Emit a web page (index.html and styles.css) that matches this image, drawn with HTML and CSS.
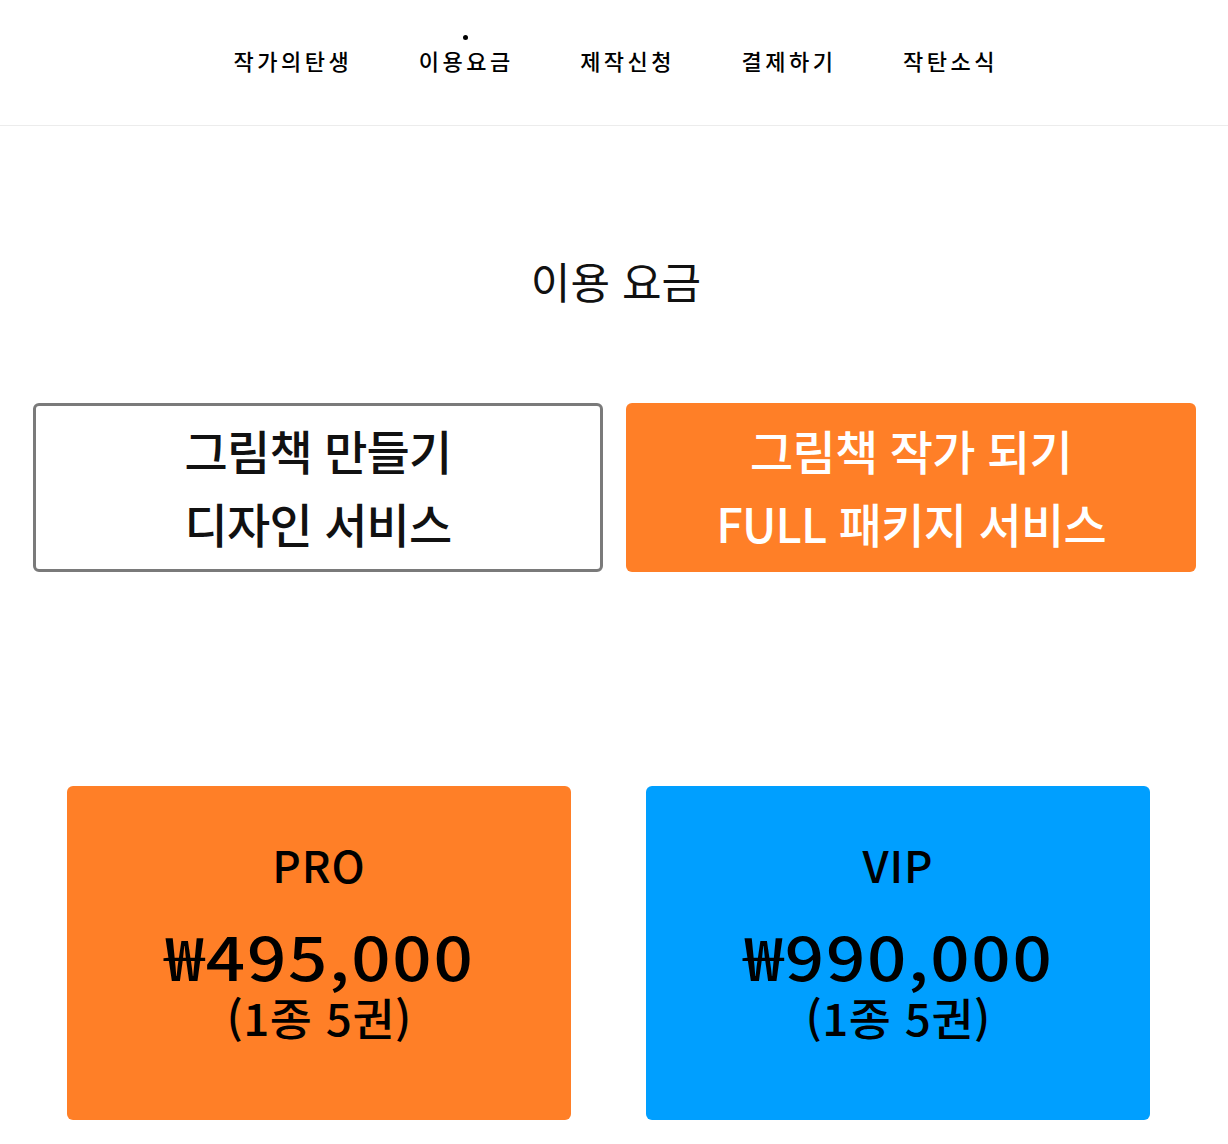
FILE: index.html
```html
<!DOCTYPE html>
<html lang="ko">
<head>
<meta charset="utf-8">
<title>이용 요금</title>
<link rel="stylesheet" href="styles.css">
</head>
<body>
<header class="nav">
  <a class="nav-item">작가의탄생</a>
  <a class="nav-item active">이용요금</a>
  <a class="nav-item">제작신청</a>
  <a class="nav-item">결제하기</a>
  <a class="nav-item">작탄소식</a>
</header>
<main class="page">
  <h1 class="title">이용 요금</h1>
  <div class="tabs">
    <div class="tab tab-outline">
      <span>그림책 만들기</span>
      <span>디자인 서비스</span>
    </div>
    <div class="tab tab-filled">
      <span>그림책 작가 되기</span>
      <span>FULL 패키지 서비스</span>
    </div>
  </div>
  <div class="plans">
    <div class="plan plan-pro">
      <div class="plan-name">PRO</div>
      <div class="plan-price">₩495,000</div>
      <div class="plan-sub">(1종 5권)</div>
    </div>
    <div class="plan plan-vip">
      <div class="plan-name">VIP</div>
      <div class="plan-price">₩990,000</div>
      <div class="plan-sub">(1종 5권)</div>
    </div>
  </div>
</main>
</body>
</html>
```
FILE: styles.css
```css
* { box-sizing: border-box; }
html, body { margin: 0; padding: 0; background: #fff; }
body {
  font-family: "Noto Sans CJK KR", "Noto Sans", sans-serif;
  color: #111;
}
.nav {
  height: 126px;
  border-bottom: 1px solid #ececec;
  display: flex;
  justify-content: center;
  align-items: center;
  gap: 70px;
  padding-bottom: 5px;
}
.nav-item {
  position: relative;
  font-size: 22px;
  font-weight: 500;
  letter-spacing: 3.5px;
  margin-right: -3.5px;
  color: #000;
  line-height: 30px;
}
.nav-item.active::before {
  content: "";
  position: absolute;
  left: 50%;
  top: -10px;
  width: 5px;
  height: 5px;
  margin-left: -3px;
  border-radius: 50%;
  background: #000;
}
.page { padding: 124px 0 0; }
.title {
  margin: 0;
  text-align: center;
  font-size: 43px;
  font-weight: 400;
  line-height: 60px;
  color: #111;
  padding-left: 4px;
}
.tabs {
  display: grid;
  grid-template-columns: 570px 570px;
  gap: 23px;
  margin: 93px 0 0 33px;
}
.tab {
  height: 169px;
  border-radius: 6px;
  display: flex;
  flex-direction: column;
  justify-content: center;
  align-items: center;
  font-size: 47px;
  font-weight: 500;
  letter-spacing: -0.8px;
  line-height: 73px;
  padding-bottom: 4px;
}
.tab-outline {
  border: 3px solid #7a7a7a;
  color: #111;
}
.tab-filled {
  background: #ff7f27;
  color: #fff;
}
.plans {
  display: grid;
  grid-template-columns: 504px 504px;
  gap: 75px;
  margin: 214px 0 0 67px;
}
.plan {
  height: 334px;
  border-radius: 6px;
  display: flex;
  flex-direction: column;
  align-items: center;
  padding-top: 53px;
  color: #000;
}
.plan-pro { background: #ff7f27; }
.plan-vip { background: #009fff; }
.plan-name {
  font-size: 44px;
  line-height: 50px;
  font-weight: 500;
  letter-spacing: 1px;
}
.plan-price {
  margin-top: 34px;
  font-size: 60px;
  line-height: 64px;
  font-weight: 500;
  letter-spacing: 1.5px;
  margin-right: -1.5px;
  transform: scaleX(1.15);
}
.plan-sub {
  margin-top: 7px;
  font-size: 44px;
  line-height: 46px;
  font-weight: 500;
  letter-spacing: 0.5px;
  margin-right: -0.5px;
  transform: scaleX(1.04);
}
```
